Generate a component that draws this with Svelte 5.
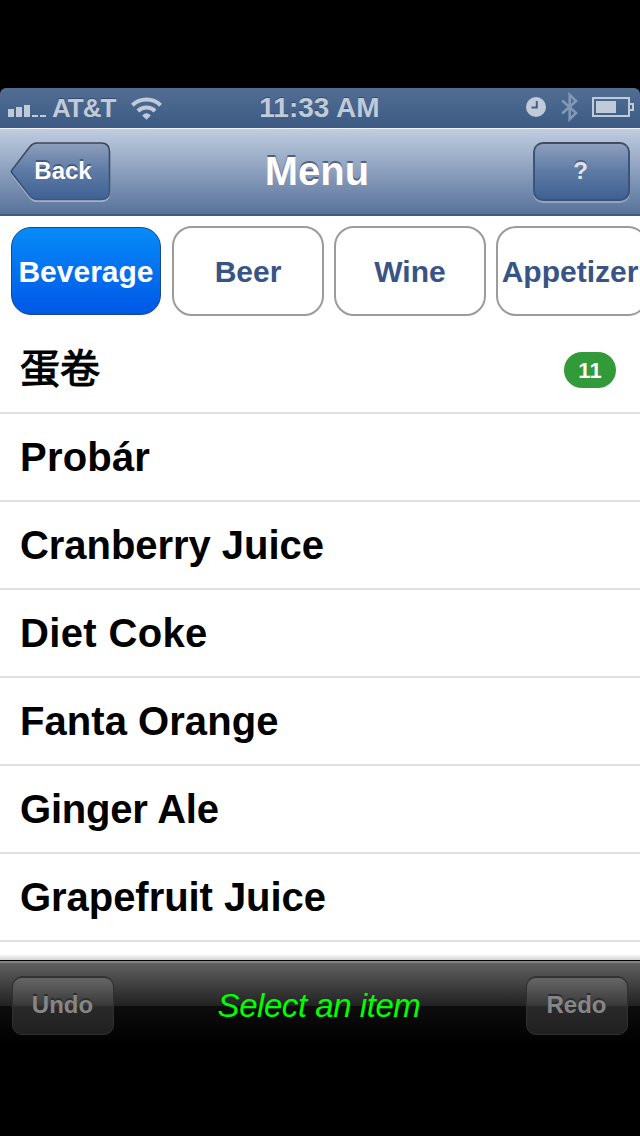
<!--
Order menu screen: category tabs, item list and the undo/redo toolbar
-->
<script lang="ts">
	type Item = { name: string; count?: number; cjk?: boolean; tracking?: number };

	const categories = ['Beverage', 'Beer', 'Wine', 'Appetizer'];

	// tracking is the letter spacing in px
	const items: Item[] = [
		{ name: '蛋卷', count: 11, cjk: true },
		{ name: 'Probár', tracking: 0.2 },
		{ name: 'Cranberry Juice', tracking: -0.05 },
		{ name: 'Diet Coke', tracking: 0.35 },
		{ name: 'Fanta Orange', tracking: 0.05 },
		{ name: 'Ginger Ale', tracking: -0.2 },
		{ name: 'Grapefruit Juice', tracking: -0.05 }
	];

	let selected = $state('Beverage');
</script>

<div class="screen">
	<header class="status-bar">
		<div class="status-left">
			<svg class="signal" width="38" height="14" viewBox="0 0 38 14" fill="currentColor">
				<rect x="0" y="5" width="6" height="8" />
				<rect x="8" y="3" width="6" height="10" />
				<rect x="16" y="1" width="6" height="12" />
				<rect x="24" y="11" width="6" height="2" />
				<rect x="32" y="11" width="6" height="2" />
			</svg>
			<span class="carrier">AT&amp;T</span>
			<svg class="wifi" width="31" height="23" viewBox="0 0 31 23" fill="none" stroke="currentColor">
				<path d="M1.4 8.2A20.500 20.500 0 0 1 29.600 8.200" stroke-width="4" />
				<path d="M6.9 14A12.400 12.400 0 0 1 24.100 14" stroke-width="4" />
				<path d="M15.500 22.800L11.200 18.500Q15.500 14 19.800 18.500Z" fill="currentColor" stroke="none" />
			</svg>
		</div>
		<span class="time">11:33 AM</span>
		<div class="status-right">
			<svg width="20" height="20" viewBox="0 0 20 20">
				<circle cx="10" cy="10" r="10" fill="currentColor" />
				<path d="M10.8 4V10.5H5.5" fill="none" stroke="#465f83" stroke-width="2" />
			</svg>
			<svg class="bluetooth" width="18" height="32" viewBox="0 0 18 32" fill="none" stroke="currentColor">
				<path d="M1.2 9.5L15 22L8.7 28.2V3.8L15 10L1.2 22.5" stroke-width="2.6" />
			</svg>
			<svg width="42" height="20" viewBox="0 0 42 20">
				<rect x="1" y="1" width="36" height="18" fill="none" stroke="currentColor" stroke-width="2" />
				<rect x="4" y="4" width="20" height="12" fill="currentColor" />
				<path d="M37 7H41V13H37" fill="none" stroke="currentColor" stroke-width="2" />
			</svg>
		</div>
	</header>

	<nav class="nav-bar">
		<button type="button" class="back-btn">
			<svg class="back-shape" width="102" height="62" viewBox="0 0 102 62">
				<defs>
					<linearGradient id="back-fill" x1="0" y1="0" x2="0" y2="1">
						<stop offset="0" stop-color="#8e9fbc" />
						<stop offset="0.5" stop-color="#5d7aa5" />
						<stop offset="1" stop-color="#3f6192" />
					</linearGradient>
					<linearGradient id="back-edge" x1="0" y1="0" x2="0" y2="1">
						<stop offset="0" stop-color="#3c4656" />
						<stop offset="1" stop-color="#3b5882" />
					</linearGradient>
				</defs>
				<path
					d="M27 1H91Q99.500 1 99.500 9.500V49Q99.500 57.500 91 57.500H27Q23 57.500 20 54L2 31Q0.800 29.500 2 28L20 4.500Q23 1 27 1Z"
					transform="translate(0 2)"
					fill="#9fb1ca"
					stroke="#9fb1ca"
					stroke-width="1.2"
				/>
				<path
					d="M27 1H91Q99.500 1 99.500 9.500V49Q99.500 57.500 91 57.500H27Q23 57.500 20 54L2 31Q0.800 29.500 2 28L20 4.500Q23 1 27 1Z"
					fill="url(#back-fill)"
					stroke="url(#back-edge)"
					stroke-width="1.6"
				/>
			</svg>
			<span class="back-label">Back</span>
		</button>
		<h1 class="title">Menu</h1>
		<button type="button" class="help-btn">?</button>
	</nav>

	<div class="categories">
		{#each categories as category}
			<button
				type="button"
				class="category"
				class:active={selected === category}
				onclick={() => (selected = category)}
			>
				{category}
			</button>
		{/each}
	</div>

	<ul class="items">
		{#each items as item}
			<li class="item">
				<span class:cjk={item.cjk} style:letter-spacing="{item.tracking ?? 0}px">
					{item.name}
				</span>
				{#if item.count}
					<span class="count">{item.count}</span>
				{/if}
			</li>
		{/each}
	</ul>

	<footer class="toolbar">
		<button type="button" class="tool-btn" disabled>Undo</button>
		<span class="hint">Select an item</span>
		<button type="button" class="tool-btn" disabled>Redo</button>
	</footer>
</div>

<style>
	:global(body) {
		background: #000;
	}

	.screen {
		box-sizing: border-box;
		width: 640px;
		height: 1136px;
		padding-top: 88px;
		display: flex;
		flex-direction: column;
		overflow: hidden;
		background: #000;
		font-family: 'Liberation Sans', 'Noto Sans CJK SC', sans-serif;
	}

	button {
		box-sizing: border-box;
		margin: 0;
		padding: 0;
		font-family: inherit;
		font-weight: bold;
		white-space: nowrap;
	}

	.status-bar {
		flex: none;
		height: 40px;
		display: grid;
		grid-template-columns: 1fr auto 1fr;
		align-items: center;
		padding: 0 6px 0 8px;
		box-sizing: border-box;
		border-radius: 6px 6px 0 0;
		background: linear-gradient(#526e92, #3c5a84);
		color: #c0cbda;
		font-size: 27px;
		font-weight: bold;
		text-shadow: 0 -1px 0 #344b6c;
	}

	.time {
		padding-right: 3px;
		font-size: 28px;
	}

	.status-left,
	.status-right {
		display: flex;
		align-items: center;
	}

	.status-right {
		justify-content: flex-end;
		padding-bottom: 2px;
	}

	.signal {
		margin: 6px 6px 0 0;
	}

	.carrier {
		font-size: 26px;
		letter-spacing: -1px;
	}

	.wifi {
		margin-left: 16px;
	}

	.bluetooth {
		margin: 0 13px 0 15px;
		color: #8298b7;
	}

	.nav-bar {
		flex: none;
		box-sizing: border-box;
		height: 88px;
		display: grid;
		grid-template-columns: 1fr auto 1fr;
		align-items: center;
		padding: 0 10px;
		border-top: 1px solid #f0f3f8;
		border-bottom: 2px solid #3f5c86;
		background: linear-gradient(#c0cddf, #8b9fbe 50%, #587299);
	}

	.back-btn {
		position: relative;
		width: 102px;
		height: 60px;
		padding-bottom: 2px;
		border: none;
		background: none;
		color: #fff;
		font-size: 24px;
		text-shadow: 0 -2px 0 #47597a;
	}

	.back-shape {
		position: absolute;
		top: 0;
		left: 0;
	}

	.back-label {
		position: relative;
		padding-left: 4px;
	}

	.title {
		margin: 0;
		padding: 0 6px 2px 0;
		color: #fff;
		font-size: 40px;
		line-height: 46px;
		text-shadow: 0 -2px 0 #53627a;
	}

	.help-btn {
		justify-self: end;
		width: 97px;
		height: 59px;
		padding: 0 2px 1px 0;
		border: 2px solid #3d5478;
		border-top-color: #414c5e;
		border-radius: 10px;
		background: linear-gradient(#8e9fbc, #5d7aa5 50%, #3f6192);
		box-shadow: 0 2px 0 #90a5c3;
		color: #dfe2e7;
		font-size: 24px;
		text-shadow: 0 -2px 0 #50668a;
	}

	.categories {
		flex: none;
		height: 110px;
		box-sizing: border-box;
		display: flex;
		gap: 10px;
		padding: 10px 0 10px 10px;
		overflow: hidden;
		background: #fff;
	}

	.category {
		flex: none;
		width: 152px;
		padding: 2px 0 0;
		border: 2px solid #9b9b9b;
		border-radius: 20px;
		background: #fff;
		color: #385487;
		font-size: 30px;
	}

	.category:last-child {
		padding-right: 4px;
	}

	.category.active {
		width: 150px;
		margin: 1px;
		border: 1px solid #164a8c;
		background: linear-gradient(#078bf8, #0057e7);
		color: #fff;
	}

	.items {
		flex: none;
		height: 634px;
		box-sizing: border-box;
		margin: 0;
		padding: 0;
		list-style: none;
		background: linear-gradient(transparent 628px, #d4d4d4 634px), #fff;
	}

	.item {
		box-sizing: border-box;
		height: 88px;
		display: flex;
		align-items: center;
		justify-content: space-between;
		padding: 0 24px 0 20px;
		border-bottom: 2px solid #e0e0e0;
		color: #000;
		font-size: 40px;
		font-weight: bold;
	}

	/* between regular and bold, like the latin rows */
	.cjk {
		padding-bottom: 6px;
		font-family: 'Noto Sans CJK SC', sans-serif;
		font-weight: 400;
		line-height: 60px;
		-webkit-text-stroke: 1.1px #000;
	}

	.count {
		width: 52px;
		height: 36px;
		margin-top: 2px;
		border-radius: 18px;
		background: #339a39;
		color: #fff;
		font-size: 22px;
		line-height: 37px;
		text-align: center;
	}

	.toolbar {
		flex: none;
		height: 90px;
		box-sizing: border-box;
		display: grid;
		grid-template-columns: 1fr auto 1fr;
		align-items: center;
		padding: 0 12px;
		border-top: 1px solid #000;
		background: linear-gradient(#838383 0 2px, #606060 2px, #212121 45px, #0d0d0d 45px, #000 84px);
	}

	.tool-btn {
		width: 102px;
		height: 58px;
		margin-top: 1px;
		padding: 0 1px 2px 0;
		border: 1px solid #303030;
		border-radius: 10px;
		background: linear-gradient(#666, #3a3a3a 48%, #292929 52%, #202020);
		box-shadow: 0 -1px 0 #333;
		color: #868686;
		font-size: 24px;
		text-shadow: 0 -2px 0 #2d2d2d;
	}

	.tool-btn:last-child {
		justify-self: end;
	}

	.hint {
		padding: 1px 2px 0 0;
		color: #0f0;
		font-size: 33px;
		font-style: italic;
		letter-spacing: -0.45px;
	}
</style>
